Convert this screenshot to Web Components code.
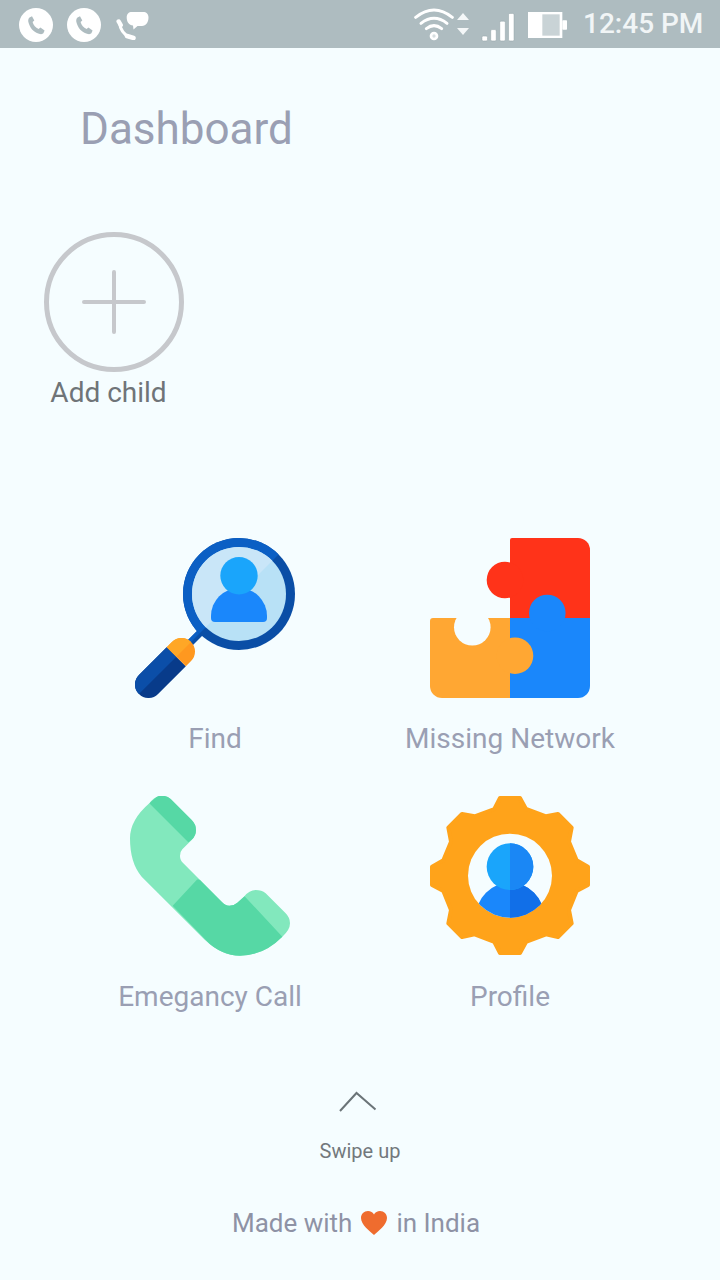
<!doctype html>
<html><head><meta charset="utf-8">
<style>
html,body{margin:0;padding:0;background:#f5fdff}
body{width:720px;height:1280px;overflow:hidden;font-family:Roboto,"Liberation Sans",sans-serif}
dashboard-app{display:block}
svg{display:block}
</style></head>
<body>
<dashboard-app>
  <status-bar></status-bar>
  <page-title>Dashboard</page-title>
  <add-child>Add child</add-child>
  <tile-row>
    <feature-tile label="Find" style="margin-left:85px">
      <svg width="160" height="160" viewBox="0 0 160 160">
        <defs>
          <clipPath id="ul"><polygon points="0,0 160,0 0,160"/></clipPath>
        </defs>
        <line x1="50" y1="110" x2="66" y2="94" stroke="#0a4ea6" stroke-width="7"/>
        <line x1="50" y1="110" x2="66" y2="94" stroke="#0b5fc4" stroke-width="7" clip-path="url(#ul)"/>
        <circle cx="104" cy="56" r="56" fill="#0a4ea6"/>
        <circle cx="104" cy="56" r="56" fill="#0b5fc4" clip-path="url(#ul)"/>
        <circle cx="104" cy="56" r="47" fill="#b8e1f6"/>
        <circle cx="104" cy="56" r="47" fill="#c9e6f8" clip-path="url(#ul)"/>
        <path d="M76 80V78a28 28 0 0 1 56 0v2a4 4 0 0 1-4 4H80a4 4 0 0 1-4-4Z" fill="#1a87fb"/>
        <circle cx="104" cy="37.700" r="18.700" fill="#1aa5fb"/>
        <path d="M31.750 109.150L50.850 128.250L23.050 156.050A13.500 13.500 0 0 1 3.950 136.950Z" fill="#083b8a"/>
        <path d="M31.750 109.150L41.300 118.700L3.950 156.050A13.500 13.500 0 0 1 3.950 136.950Z" fill="#0b4ea8"/>
        <path d="M31.750 109.150L36.950 103.950A13.500 13.500 0 0 1 56.050 123.050L50.850 128.250Z" fill="#ff981f"/>
        <path d="M31.750 109.150L36.950 103.950A13.500 13.500 0 0 1 56.050 103.950L41.300 118.700Z" fill="#ffa726"/>
      </svg>
    </feature-tile>
    <feature-tile label="Missing Network" style="margin-left:35px">
      <svg width="160" height="160" viewBox="0 0 160 160">
        <path d="M80 2a2 2 0 0 1 2-2h66a12 12 0 0 1 12 12v68H80Z" fill="#ff3319"/>
        <circle cx="75" cy="42" r="18.300" fill="#ff3319"/>
        <path d="M80 80h80v68a12 12 0 0 1-12 12H80Z" fill="#1a87fb"/>
        <circle cx="117.300" cy="75" r="18.300" fill="#1a87fb"/>
        <path d="M3 80H80V160H12A12 12 0 0 1 0 148V83A3 3 0 0 1 3 80Z" fill="#ffa733"/>
        <circle cx="85" cy="117.700" r="18.300" fill="#ffa733"/>
        <circle cx="42.300" cy="89.300" r="18.300" fill="#f5fdff"/>
      </svg>
    </feature-tile>
  </tile-row>
  <tile-row style="margin-top:37px">
    <feature-tile label="Emegancy Call" style="margin-left:80px">
      <svg width="160" height="160" viewBox="30 33 480 480">
        <defs>
          <clipPath id="pa"><polygon points="88,55 205,172 300,100 150,0"/></clipPath>
          <clipPath id="pb"><polygon points="232,283 158,362 330,540 540,510 487,455 375,335 330,300"/></clipPath>
        </defs>
        <path d="M88 55Q105 32 125 32Q140 32 152 42L215 105Q228 118 228 135Q228 152 215 165L187 193Q180 200 180 213Q180 226 190 235L305 350Q316 362 328 362Q342 362 352 353L372 335Q388 315 407 315Q425 315 437 325L497 385Q510 398 510 415Q510 435 487 455Q430 512 360 512Q305 512 255 465L65 275Q30 235 30 160Q30 105 88 55Z" fill="#82e8bd"/>
        <g clip-path="url(#pa)"><path d="M88 55Q105 32 125 32Q140 32 152 42L215 105Q228 118 228 135Q228 152 215 165L187 193Q180 200 180 213Q180 226 190 235L305 350Q316 362 328 362Q342 362 352 353L372 335Q388 315 407 315Q425 315 437 325L497 385Q510 398 510 415Q510 435 487 455Q430 512 360 512Q305 512 255 465L65 275Q30 235 30 160Q30 105 88 55Z" fill="#56d8a5"/></g>
        <g clip-path="url(#pb)"><path d="M88 55Q105 32 125 32Q140 32 152 42L215 105Q228 118 228 135Q228 152 215 165L187 193Q180 200 180 213Q180 226 190 235L305 350Q316 362 328 362Q342 362 352 353L372 335Q388 315 407 315Q425 315 437 325L497 385Q510 398 510 415Q510 435 487 455Q430 512 360 512Q305 512 255 465L65 275Q30 235 30 160Q30 105 88 55Z" fill="#56d8a5"/></g>
      </svg>
    </feature-tile>
    <feature-tile label="Profile" style="margin-left:40px">
      <svg width="160" height="160" viewBox="30 33 480 480">
        <defs>
          <clipPath id="hole"><circle cx="270" cy="272" r="126"/></clipPath>
          <clipPath id="gr"><rect x="270" y="0" width="270" height="540"/></clipPath>
        </defs>
        <polygon points="240,39 300,39 318,72 378,94 414,87 455,128 447,170 470,226 504,245 504,300 470,318 447,375 455,415 414,456 378,448 318,471 300,504 240,504 223,471 164,448 126,456 85,415 93,375 70,318 36,300 36,245 70,226 93,170 85,128 126,87 164,94 223,72" fill="#ffa31a" stroke="#ffa31a" stroke-width="12" stroke-linejoin="round"/>
        <circle cx="270" cy="272" r="126" fill="#f5fdff"/>
        <g clip-path="url(#hole)">
          <circle cx="270" cy="395" r="102" fill="#1a87fb"/>
          <g clip-path="url(#gr)"><circle cx="270" cy="395" r="102" fill="#116fe8"/></g>
        </g>
        <circle cx="270" cy="245" r="70" fill="#1aa5fb"/>
        <g clip-path="url(#gr)"><circle cx="270" cy="245" r="70" fill="#1a87f5"/></g>
      </svg>
    </feature-tile>
  </tile-row>
  <swipe-hint>Swipe up</swipe-hint>
  <made-with></made-with>
</dashboard-app>
<script>
function make(name, html){
  customElements.define(name, class extends HTMLElement{
    constructor(){super();this.attachShadow({mode:'open'}).innerHTML=html;}
    connectedCallback(){
      const l=this.shadowRoot.querySelector('[data-label]');
      if(l) l.textContent=this.getAttribute('label')||'';
    }
  });
}
const callIcon=`<svg width="34" height="34" viewBox="0 0 34 34" style="margin-top:2px"><circle cx="17" cy="17" r="17" fill="#fff"/><path d="M10.500 9.500L13 8.300L15.300 12.600L13.600 14.100C14.400 17.400 16.600 19.800 19.600 21L21.400 19.500L25.600 22.400L24.500 25.100C23.800 26.300 21.700 26.400 20 25.800C14.400 24.200 10.600 19.500 9.300 13.700C9 12 9.500 10.400 10.500 9.500Z" fill="#aebcc0"/></svg>`;
make('status-bar',`<style>
:host{display:flex;align-items:center;height:48px;background:#aebcc0;padding:0 18px 0 19px;box-sizing:border-box}
.l,.r{display:flex;align-items:center}
.l{gap:14px}.r{margin-left:auto}
.t{font:500 28px/50px Roboto,sans-serif;color:#f1f5f6;margin-left:16px;white-space:nowrap;width:119px;}
</style>
<div class="l">${callIcon}${callIcon}
<svg width="33" height="30" viewBox="0 0 33 30" style="margin-left:1px;margin-top:1px"><g fill="none" stroke="#fff" stroke-linecap="round"><path d="M3.500 12.500Q4.500 23 14 27.500" stroke-width="3"/><path d="M2.700 11.500L4.700 15" stroke-width="4.500"/><path d="M11 26L17.500 28" stroke-width="4.500"/></g><path d="M16 2H27C30.500 2 32.500 4 32.500 7.500C32.500 12 30 16 26 16H21.500L17.500 19.500L17 15.500C13 15 10.700 12 10.700 7.500C10.700 4 12.500 2 16 2Z" fill="#fff"/></svg></div>
<div class="r">
<svg width="41" height="36" viewBox="45 18 123 108" fill="none" stroke="#fff" stroke-width="9" stroke-linecap="round"><path d="M50 52Q105 8 160 52"/><path d="M66 70Q105 40 144 70"/><path d="M82 86Q105 68 128 86"/><circle cx="105" cy="108" r="9" stroke-width="8" fill="#d6dee0"/></svg>
<svg width="12" height="22" viewBox="0 0 12 22" fill="#f4f7f8" style="margin:0 0 0 2px"><polygon points="6,0 12,7 0,7"/><polygon points="0,15 12,15 6,22"/></svg>
<svg width="34" height="30" viewBox="245 35 105 90" style="margin-left:12px;margin-top:5px" fill="#fff" stroke="#8f9fa4" stroke-width="1.500"><rect x="248" y="108" width="17" height="15" rx="4"/><rect x="275" y="88" width="17" height="35" rx="4"/><rect x="303" y="62" width="17" height="61" rx="4"/><rect x="330" y="38" width="17" height="85" rx="4"/></svg>
<svg width="39" height="26" viewBox="387 35 117 78" style="margin-left:13px;margin-top:2px"><rect x="387" y="35" width="103" height="78" fill="#fff"/><rect x="430" y="42" width="52" height="64" fill="#c9d3d6"/><rect x="490" y="60" width="14" height="28" rx="2" fill="#fff"/></svg>
<div class="t">12:45 PM</div>
</div>`);
make('page-title',`<style>:host{display:block;padding:51px 0 0 80px;font:400 44px/60px Roboto,sans-serif;color:#9a9fb3}</style><slot></slot>`);
make('add-child',`<style>
:host{display:block;margin:73px 0 0 44px;width:140px}
.c{box-sizing:border-box;width:140px;height:140px;border:5px solid #c6c8cc;border-radius:50%;display:grid;place-items:center}
.lbl{padding-top:1px;font:400 28px/40px Roboto,sans-serif;color:#6f7478;width:129px;text-align:center;white-space:nowrap}
</style>
<div class="c"><svg width="64" height="64" viewBox="0 0 64 64" stroke="#c6c8cc" stroke-width="4" stroke-linecap="round"><path d="M2 32H62M32 2V62"/></svg></div>
<div class="lbl"><slot></slot></div>`);
make('tile-row',`<style>:host{display:flex;margin-top:125px}</style><slot></slot>`);
make('feature-tile',`<style>
:host{display:flex;flex-direction:column;align-items:center;width:260px}
.lbl{margin-top:21px;font:400 28px/40px Roboto,sans-serif;color:#9a9fb3;white-space:nowrap}
</style><slot></slot><div class="lbl" data-label></div>`);
make('swipe-hint',`<style>
:host{display:flex;flex-direction:column;align-items:center;margin:73px 0 0}
svg{display:block;margin-left:-4px}
.lbl{margin-top:22px;font:400 20px/30px Roboto,sans-serif;color:#72787c}
</style><svg width="38" height="24" viewBox="0 0 38 24" fill="none" stroke="#6b7478" stroke-width="2"><path d="M1 21L17.500 3L36.500 19.500"/></svg><div class="lbl"><slot></slot></div>`);
make('made-with',`<style>
:host{display:flex;justify-content:center;align-items:center;gap:9px;margin-top:37px;padding-right:8px;font:400 26px/40px Roboto,sans-serif;color:#8e92a5}
</style><span>Made with</span><svg width="26" height="24" viewBox="0 0 26 24"><path d="M13 24C9 20 0 14 0 7C0 3 3 0 7 0C9.500 0 12 1.500 13 3.500C14 1.500 16.500 0 19 0C23 0 26 3 26 7C26 14 17 20 13 24Z" fill="#ef6c2e"/></svg><span>in India</span>`);
make('dashboard-app',`<style>:host{display:block;width:720px;height:1280px}</style><slot></slot>`);
</script>
</body></html>
